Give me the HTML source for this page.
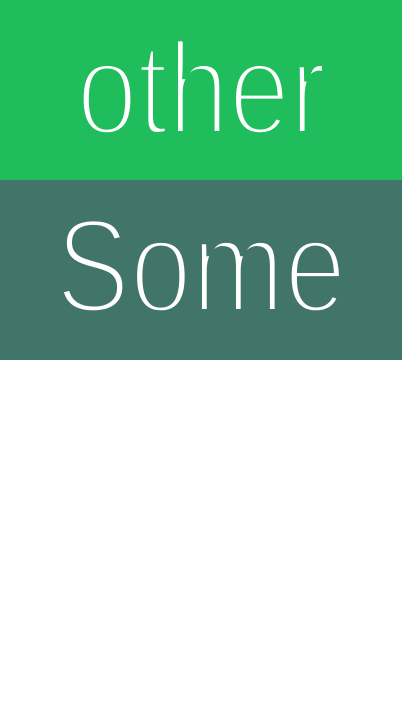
<!DOCTYPE html>
<html><head><meta charset="utf-8"><style>
html,body{margin:0;padding:0;width:402px;height:720px;background:#fff;overflow:hidden}
.b{position:absolute;left:0;width:402px;height:180px}
.t{position:absolute;left:0;width:402px;text-align:center;color:#fff;font-family:"Liberation Sans",sans-serif;line-height:1;white-space:nowrap;paint-order:fill stroke}
.t span{display:inline-block;transform:scaleX(0.83);transform-origin:center}
</style></head><body>
<div class="b" style="top:0;background:#20bd5d"></div>
<div class="b" style="top:180px;background:#42756a"></div>
<div class="t" style="top:23px;font-size:132px;-webkit-text-stroke:6px #20bd5d"><span>other</span></div>
<div class="t" style="top:200px;font-size:134px;-webkit-text-stroke:6px #42756a"><span>Some</span></div>
</body></html>
